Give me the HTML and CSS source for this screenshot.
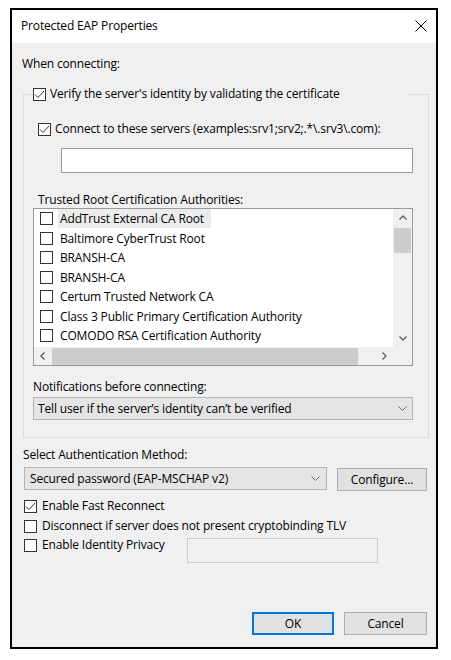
FILE: index.html
```html
<!DOCTYPE html>
<html>
<head>
<meta charset="utf-8">
<title>Protected EAP Properties</title>
<link rel="stylesheet" href="styles.css">
</head>
<body>
<div class="window">
  <div class="titlebar">
    <span class="title">Protected EAP Properties</span>
    <svg class="close" viewBox="0 0 12 12"><path d="M0.5 0.5 L11.5 11.5 M11.5 0.5 L0.5 11.5" stroke="#000" stroke-width="1" fill="none"/></svg>
  </div>
  <div class="content">
    <div class="label when">When connecting:</div>
    <fieldset class="group">
      <legend class="check-row legend">
        <svg class="cb" viewBox="0 0 13 13"><rect x="0.5" y="0.5" width="12" height="12" fill="#fff" stroke="#333"/><path d="M2 6.5 L5 9.5 L11 3" fill="none" stroke="#333"/></svg>
        <span>Verify the server's identity by validating the certificate</span>
      </legend>
      <div class="check-row connect">
        <svg class="cb" viewBox="0 0 13 13"><rect x="0.5" y="0.5" width="12" height="12" fill="#fff" stroke="#333"/><path d="M2 6.5 L5 9.5 L11 3" fill="none" stroke="#333"/></svg>
        <span>Connect to these servers (examples:srv1;srv2;.*\.srv3\.com):</span>
      </div>
      <div class="textbox servers"></div>
      <div class="label trusted">Trusted Root Certification Authorities:</div>
      <div class="listview">
        <div class="items">
          <div class="row sel"><svg class="cb" viewBox="0 0 13 13"><rect x="0.5" y="0.5" width="12" height="12" fill="#fff" stroke="#333"/></svg><span class="t">AddTrust External CA Root</span></div>
          <div class="row"><svg class="cb" viewBox="0 0 13 13"><rect x="0.5" y="0.5" width="12" height="12" fill="#fff" stroke="#333"/></svg><span class="t">Baltimore CyberTrust Root</span></div>
          <div class="row"><svg class="cb" viewBox="0 0 13 13"><rect x="0.5" y="0.5" width="12" height="12" fill="#fff" stroke="#333"/></svg><span class="t">BRANSH-CA</span></div>
          <div class="row"><svg class="cb" viewBox="0 0 13 13"><rect x="0.5" y="0.5" width="12" height="12" fill="#fff" stroke="#333"/></svg><span class="t">BRANSH-CA</span></div>
          <div class="row"><svg class="cb" viewBox="0 0 13 13"><rect x="0.5" y="0.5" width="12" height="12" fill="#fff" stroke="#333"/></svg><span class="t">Certum Trusted Network CA</span></div>
          <div class="row"><svg class="cb" viewBox="0 0 13 13"><rect x="0.5" y="0.5" width="12" height="12" fill="#fff" stroke="#333"/></svg><span class="t">Class 3 Public Primary Certification Authority</span></div>
          <div class="row"><svg class="cb" viewBox="0 0 13 13"><rect x="0.5" y="0.5" width="12" height="12" fill="#fff" stroke="#333"/></svg><span class="t">COMODO RSA Certification Authority</span></div>
        </div>
        <div class="vscroll">
          <div class="sbtn"><svg class="arrow" viewBox="0 0 8 5"><path d="M0.5 4.5 L4 1 L7.5 4.5" fill="none" stroke="#606060" stroke-width="1.4"/></svg></div>
          <div class="vthumb"></div>
          <div class="spacer"></div>
          <div class="sbtn"><svg class="arrow" viewBox="0 0 8 5"><path d="M0.5 0.5 L4 4 L7.5 0.5" fill="none" stroke="#606060" stroke-width="1.4"/></svg></div>
        </div>
        <div class="hscroll">
          <div class="sbtn"><svg class="arrow-h" viewBox="0 0 5 8"><path d="M4.5 0.5 L1 4 L4.5 7.5" fill="none" stroke="#606060" stroke-width="1.4"/></svg></div>
          <div class="hthumb"></div>
          <div class="spacer"></div>
          <div class="sbtn"><svg class="arrow-h" viewBox="0 0 5 8"><path d="M0.5 0.5 L4 4 L0.5 7.5" fill="none" stroke="#606060" stroke-width="1.4"/></svg></div>
        </div>
        <div class="corner"></div>
      </div>
      <div class="label notif">Notifications before connecting:</div>
      <div class="combo notif-combo">
        <span>Tell user if the server’s identity can’t be verified</span>
        <svg class="chev" viewBox="0 0 9 5"><path d="M0.5 0.5 L4.5 4.5 L8.5 0.5" fill="none" stroke="#6d6d6d" stroke-width="1"/></svg>
      </div>
    </fieldset>
    <div class="label method">Select Authentication Method:</div>
    <div class="auth-row">
      <div class="combo auth-combo">
        <span>Secured password (EAP-MSCHAP v2)</span>
        <svg class="chev" viewBox="0 0 9 5"><path d="M0.5 0.5 L4.5 4.5 L8.5 0.5" fill="none" stroke="#6d6d6d" stroke-width="1"/></svg>
      </div>
      <div class="btn configure">Configure...</div>
    </div>
    <div class="check-row opt fast">
      <svg class="cb" viewBox="0 0 13 13"><rect x="0.5" y="0.5" width="12" height="12" fill="#fff" stroke="#333"/><path d="M2 6.5 L5 9.5 L11 3" fill="none" stroke="#333"/></svg>
      <span>Enable Fast Reconnect</span>
    </div>
    <div class="check-row opt disconnect">
      <svg class="cb" viewBox="0 0 13 13"><rect x="0.5" y="0.5" width="12" height="12" fill="#fff" stroke="#333"/></svg>
      <span>Disconnect if server does not present cryptobinding TLV</span>
    </div>
    <div class="identity-row">
      <div class="check-row identity">
        <svg class="cb" viewBox="0 0 13 13"><rect x="0.5" y="0.5" width="12" height="12" fill="#fff" stroke="#333"/></svg>
        <span>Enable Identity Privacy</span>
      </div>
      <div class="textbox disabled"></div>
    </div>
    <div class="footer">
      <div class="btn ok">OK</div>
      <div class="btn cancel">Cancel</div>
    </div>
  </div>
</div>
</body>
</html>
```

FILE: styles.css
```css
* { box-sizing: border-box; }

body {
  margin: 0;
  background: #fff;
  font-family: "Open Sans", "Noto Sans", sans-serif;
  font-size: 12px;
  line-height: 16px;
  color: #000;
  letter-spacing: -0.15px;
}

.window {
  margin: 8px 0 0 10px;
  width: 428px;
  height: 641px;
  border: 2px solid #000;
  background: #f0f0f0;
  display: flex;
  flex-direction: column;
}

.titlebar {
  height: 33px;
  flex: none;
  background: #fff;
  display: flex;
  align-items: center;
  justify-content: space-between;
  padding: 0 9px 1px 9px;
}

.close { width: 12px; height: 12px; display: block; }

.content {
  flex: 1;
  display: flex;
  flex-direction: column;
  padding: 13px 7px 12px 11px;
}

.label { height: 16px; white-space: nowrap; }
.when { margin-left: -1px; }

.check-row {
  display: flex;
  align-items: center;
  gap: 4px;
  height: 16px;
  white-space: nowrap;
}

.cb { width: 13px; height: 13px; flex: none; display: block; }

.group {
  margin: 14px 0 0 0;
  padding: 0 15px 17px 9px;
  border: 1px solid #dcdcdc;
  min-width: 0;
}

.legend {
  padding: 0;
  width: 375px;
}

.connect { margin: 19px 0 0 5px; }

.textbox {
  background: #fff;
  border: 1px solid #9a9a9a;
  height: 25px;
}
.servers { margin: 11px 0 0 28px; }

.trusted { margin: 19px 0 0 5px; }

.listview {
  height: 158px;
  border: 1px solid #9a9a9a;
  background: #fff;
  display: grid;
  grid-template-columns: 1fr 19px;
  grid-template-rows: 1fr 18px;
}

.items {
  overflow: hidden;
  padding-left: 6px;
}

.row {
  height: 19.5px;
  display: flex;
  align-items: center;
  gap: 5px;
  white-space: nowrap;
}
.row .t { padding: 0 7px 0 2px; line-height: 19px; }
.row.sel .t { background: #ececec; }

.vscroll {
  background: #f0f0f0;
  display: flex;
  flex-direction: column;
  align-items: center;
}
.hscroll {
  background: #f0f0f0;
  display: flex;
  align-items: center;
}
.corner { background: #f0f0f0; }

.sbtn {
  width: 17px;
  height: 17px;
  flex: none;
  display: flex;
  align-items: center;
  justify-content: center;
}
.arrow { width: 8px; height: 5px; display: block; }
.arrow-h { width: 5px; height: 8px; display: block; }
.spacer { flex: 1; }

.vthumb {
  width: 17px;
  height: 25px;
  margin-top: 2px;
  background: #cdcdcd;
}
.hthumb {
  height: 17px;
  width: 306px;
  margin-left: 1px;
  background: #cdcdcd;
}

.notif { margin-top: 13px; }

.combo {
  height: 23px;
  border: 1px solid #b4b4b4;
  background: #e5e5e5;
  display: flex;
  align-items: center;
  justify-content: space-between;
  padding: 0 5px 0 4px;
  white-space: nowrap;
}
.notif-combo { margin-top: 2px; }
.chev { width: 9px; height: 5px; display: block; }

.method { margin-top: 9px; }

.auth-row {
  display: flex;
  gap: 10px;
  margin-top: 4px;
  padding-left: 1px;
}
.auth-combo { width: 303px; padding-right: 6px; padding-left: 5px; }

.btn {
  height: 23px;
  border: 1px solid #adadad;
  background: #e1e1e1;
  display: flex;
  align-items: center;
  justify-content: center;
}
.configure { width: 90px; margin-top: 1px; }

.opt { padding-left: 1px; gap: 5px; }
.fast { margin-top: 7px; }
.disconnect { margin-top: 4px; }

.identity-row {
  display: flex;
  align-items: flex-start;
  margin-top: 3px;
  padding-left: 1px;
}
.identity { width: 163px; gap: 5px; }
.textbox.disabled {
  width: 191px;
  margin-top: 1px;
  background: #f0f0f0;
  border-color: #cccccc;
}

.footer {
  margin-top: auto;
  display: flex;
  justify-content: flex-end;
  gap: 10px;
  padding-right: 2px;
}
.ok {
  width: 82px;
  border: 1px solid #0078d7;
  box-shadow: inset 0 0 0 1px #0078d7;
}
.cancel { width: 83px; }
```
